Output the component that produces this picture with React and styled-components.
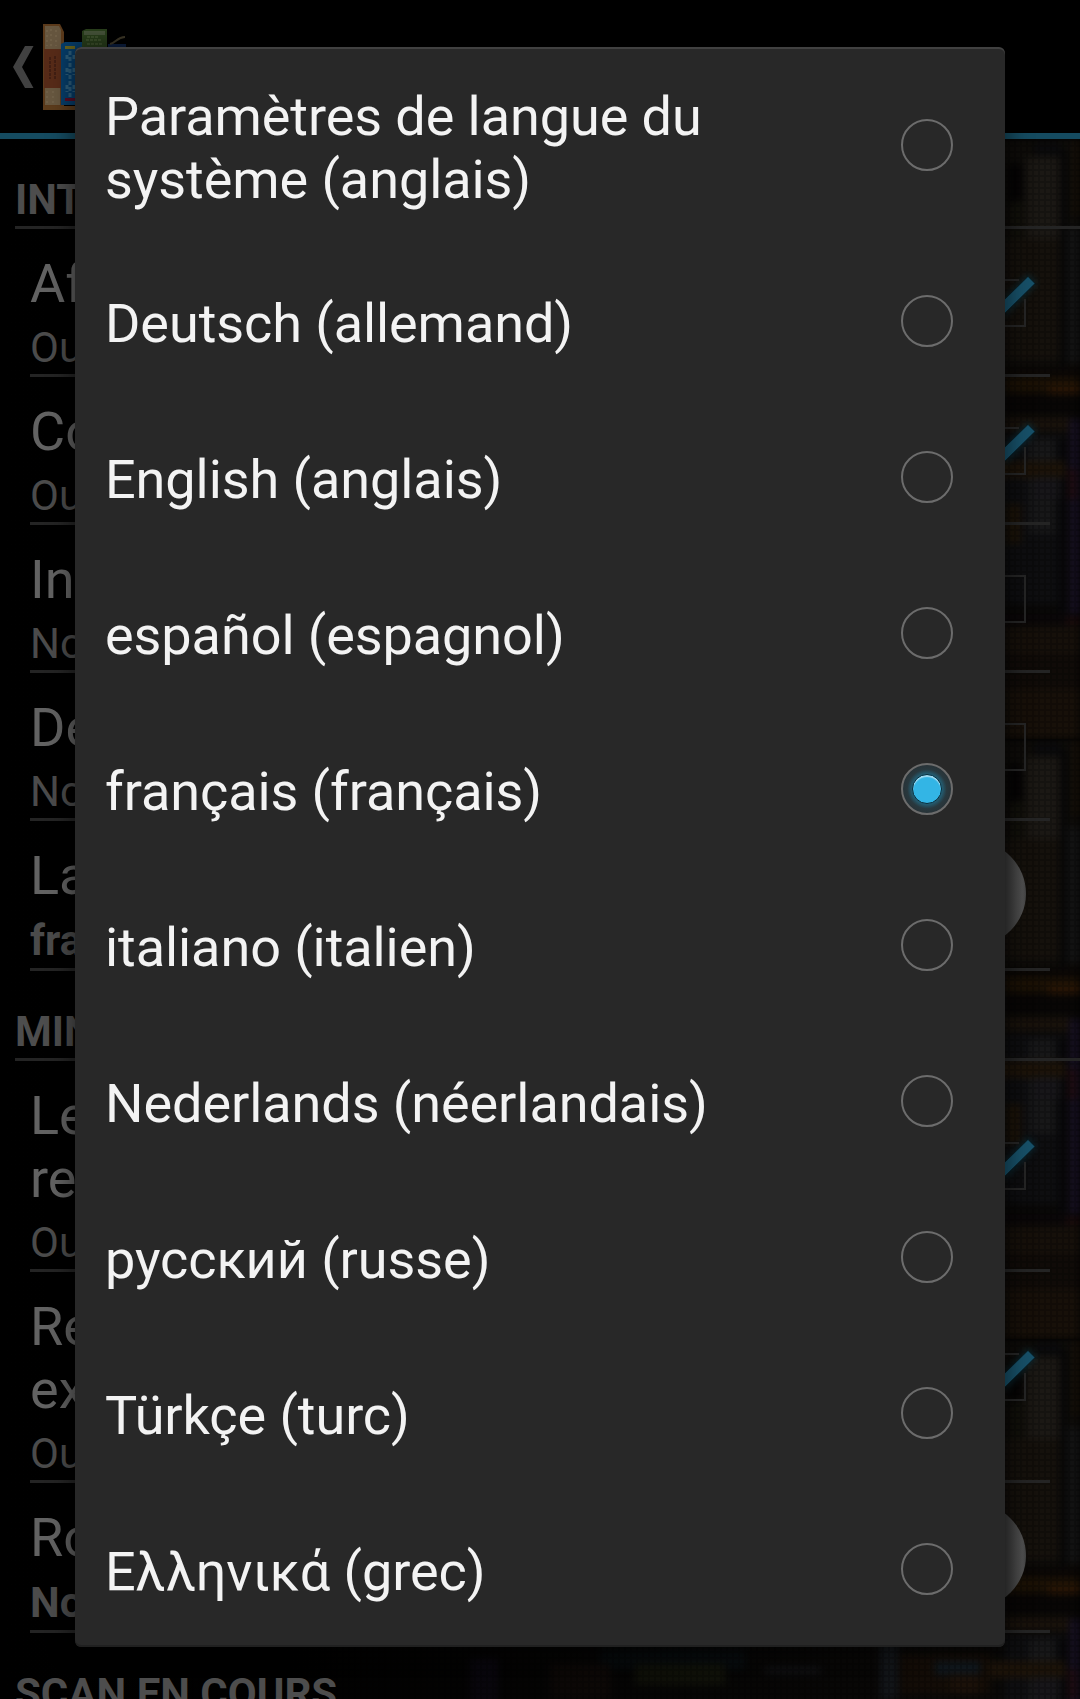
import React from "react";
import styled, { createGlobalStyle, css } from "styled-components";

const GlobalStyle = createGlobalStyle`
  *, *::before, *::after { box-sizing: border-box; }
  html, body { margin: 0; background: #000; overflow: hidden; }
`;

const Screen = styled.div`
  position: relative;
  isolation: isolate;
  width: 1080px;
  height: 1699px;
  overflow: hidden;
  background: #000;
  font-family: Roboto, "Noto Sans", sans-serif;
`;

/* ---------- action bar ---------- */

const ActionBar = styled.header`
  display: flex;
  align-items: flex-start;
  height: 139px;
  padding: 23px 0 0 13px;
  background: #000;
  border-bottom: 6px solid #154b60;
`;

const BackIcon = styled.svg`
  width: 21px;
  height: 42px;
  margin: 23px 9px 0 0;
`;

const Logo = styled.svg`
  width: 84px;
  height: 88px;
`;

const BooksLogo = () => (
  <Logo viewBox="43 23 84 88">
    <path d="M43 24h17l4 8v78h-21z" fill="#5b3a1b" />
    <path d="M45 26h14l2 4v19H45z" fill="#66563f" />
    <path d="M44 49h18v39H44z" fill="#572b18" />
    <path d="M45 88h15v17H45z" fill="#685840" />
    <path d="M43 106h40v4H43z" fill="#5c3c1c" />
    <path d="M50 57v22M55 56v24" stroke="#3c1c12" strokeWidth="1.5" strokeDasharray="3 1" />
    <path d="M47 30v16M51 29v17M56 30v16M47 91v12M53 91v12" stroke="#786850" strokeWidth="1" strokeDasharray="2 3" />
    <path d="M61 44l4-2h18v63H61z" fill="#063e6b" />
    <path d="M65 46h10v3H65z" fill="#6a661d" />
    <path d="M70 51v46M67 55v6M74 55v6M67 68v7M74 68v7M67 85v7M74 85v7" stroke="#2d5f7d" strokeWidth="3" strokeDasharray="4 2" />
    <path d="M65 98h11v3H65z" fill="#5a0d25" />
    <path d="M82 31l4-2h21v18H82z" fill="#2a401c" />
    <path d="M84 31h21v4H84z" fill="#46543a" />
    <path d="M86 40h16M87 37h12M87 44h15" stroke="#465a33" strokeWidth="1.5" strokeDasharray="3 1" />
    <path d="M108 44h18v6h-18z" fill="#0d2145" />
    <path d="M110 44c6-1 7-7 15-7" fill="none" stroke="#3f3929" strokeWidth="2" />
  </Logo>
);

/* ---------- bookshelf wallpaper ---------- */

const Wallpaper = styled.svg`
  position: absolute;
  z-index: -1;
  left: 0;
  top: 139px;
  width: 1080px;
  height: 1560px;
`;

const SHAPES = [
  [0, 0, 1080, 600, "#090807"],
  [1005, 0, 75, 250, "#0e0c09"],
  [1026, 18, 34, 190, "#1b1814"],
  [1008, 25, 14, 40, "#050404"],
  [1012, 62, 10, 70, "#12110a"],
  [1035, 4, 25, 12, "#0a0a0c"],
  [1060, 10, 7, 220, "#060606"],
  [1067, 88, 13, 135, "#131313"],
  [1072, 0, 8, 76, "#150f08"],
  [1005, 100, 55, 120, "#15110c"],
  [1005, 228, 75, 12, "#0a0705"],
  [1005, 238, 75, 16, "#1b1105"],
  [1048, 246, 32, 9, "#2a1605"],
  [1005, 256, 75, 18, "#080605"],
  [1005, 278, 65, 14, "#19120b"],
  [1005, 295, 60, 170, "#0e0e10"],
  [1028, 300, 28, 95, "#171718"],
  [1058, 300, 7, 190, "#070709"],
  [1069, 280, 11, 200, "#150f1f"],
  [1068, 330, 9, 30, "#1e0c12"],
  [1006, 365, 15, 40, "#1b1309"],
  [1005, 475, 75, 10, "#0a0708"],
  [1066, 479, 14, 6, "#1e0b0c"],
  [1005, 487, 75, 28, "#16100a"],
  [1005, 515, 75, 35, "#100b08"],
  [1005, 550, 75, 50, "#171009"],
  [600, 310, 145, 20, "#0a1013"],
  [635, 325, 90, 21, "#17190d"],
  [470, 320, 28, 45, "#160f20"],
  [550, 325, 60, 35, "#170f0c"],
  [765, 328, 55, 7, "#151518"],
  [880, 305, 18, 55, "#14171b"],
  [900, 315, 90, 40, "#140d07"],
  [935, 322, 45, 14, "#10171d"],
  [950, 335, 28, 20, "#1b1109"],
  [990, 322, 75, 17, "#1c1309"],
  [1035, 338, 25, 22, "#171619"],
];

const Bookshelf = () => (
  <Wallpaper viewBox="0 0 1080 1560">
    <defs>
      <filter id="soft" x="-10%" y="-10%" width="120%" height="120%" colorInterpolationFilters="sRGB">
        <feGaussianBlur stdDeviation="3.5" />
      </filter>
      <pattern id="mesh" width="6" height="6" patternUnits="userSpaceOnUse">
        <path d="M0 1h6M1 0v6" stroke="#000" strokeWidth="2" opacity="0.22" />
      </pattern>
      <pattern id="shelf" width="1080" height="600" patternUnits="userSpaceOnUse">
        <g filter="url(#soft)">
          {SHAPES.map(([x, y, w, h, fill], i) => (
            <rect key={i} x={x} y={y} width={w} height={h} fill={fill} />
          ))}
        </g>
      </pattern>
      <linearGradient id="fade">
        <stop offset="0" stopColor="#000" />
        <stop offset="0.25" stopColor="#000" stopOpacity="0.9" />
        <stop offset="0.9" stopColor="#000" stopOpacity="0" />
      </linearGradient>
    </defs>
    <rect width="1080" height="1560" fill="url(#shelf)" />
    <rect width="1080" height="1560" fill="url(#mesh)" />
    <rect width="1080" height="1560" fill="url(#fade)" />
  </Wallpaper>
);

/* ---------- settings list ---------- */

const Settings = styled.main`
  display: flex;
  flex-direction: column;
`;

const Category = styled.h2`
  flex: none;
  height: 90px;
  margin: 0 0 0 15px;
  padding-top: 36px;
  border-bottom: 3px solid #242424;
  color: #4d4d4d;
  font-size: 42px;
  font-weight: 700;
  line-height: 49px;
  white-space: nowrap;
`;

const Preference = styled.section`
  flex: none;
  display: flex;
  justify-content: space-between;
  align-items: center;
  height: ${(p) => p.$height}px;
  margin: 0 30px;
  padding-right: 24px;
  border-bottom: 3px solid #242424;
`;

const PrefText = styled.div`
  align-self: flex-start;
  padding-top: 23px;
`;

const PrefTitle = styled.div`
  color: #626262;
  font-size: 54px;
  line-height: 63px;
  white-space: pre-line;
`;

const PrefSummary = styled.div`
  margin-top: ${(p) => (p.$bold ? 9 : 8)}px;
  color: #4b4b4b;
  font-size: 42px;
  line-height: 49px;
  font-weight: ${(p) => (p.$bold ? 700 : 400)};
`;

const CheckIcon = styled.svg`
  width: 60px;
  height: 60px;
  margin: 2px -12px 0 0;
  overflow: visible;
`;

const Knob = styled.div`
  width: 105px;
  height: 105px;
  margin-bottom: 3px;
  border-radius: 50%;
  background: linear-gradient(90deg, #303030 75%, #505050 97%, #444 100%);
`;

const CheckBox = ({ checked }) => (
  <CheckIcon viewBox="0 0 60 60">
    {checked ? (
      <>
        <path d="M26 26L50 1l9 9L26 44z" fill="#0c3a49" opacity="0.55" filter="url(#soft)" />
        <path d="M41 7H1v46h46V26" fill="none" stroke="#252525" strokeWidth="2" />
        <path d="M26 27L50 3.500l7 7L26 41z" fill="#175068" stroke="#041217" strokeWidth="0.6" />
      </>
    ) : (
      <path d="M1 7h46v46H1z" fill="none" stroke="#252525" strokeWidth="2" />
    )}
  </CheckIcon>
);

const WIDGETS = {
  on: <CheckBox checked />,
  off: <CheckBox />,
  knob: <Knob />,
};

const SECTIONS = [
  {
    name: "INT",
    items: [
      { title: "Af", summary: "Ou", widget: "on", height: 148 },
      { title: "Co", summary: "Ou", widget: "on", height: 148 },
      { title: "In", summary: "No", widget: "off", height: 148 },
      { title: "De", summary: "No", widget: "off", height: 148 },
      { title: "La", summary: "fra", widget: "knob", height: 150 },
    ],
  },
  {
    name: "MIN",
    items: [
      { title: "Le\nre", summary: "Ou", widget: "on", height: 211 },
      { title: "Re\nex", summary: "Ou", widget: "on", height: 211 },
      { title: "Ro", summary: "No", widget: "knob", height: 150 },
    ],
  },
  { name: "SCAN EN COURS", items: [] },
];

/* ---------- language dialog ---------- */

const Dialog = styled.div`
  position: absolute;
  left: 75px;
  top: 47px;
  width: 930px;
  height: 1600px;
  overflow: hidden;
  display: flex;
  flex-direction: column;
  border-radius: 6px;
  background: #282828;
  box-shadow: 0 0 22px 4px rgba(0, 0, 0, 0.5);

  &::after {
    content: "";
    position: absolute;
    inset: 0;
    border-radius: 6px;
    box-shadow: inset 0 2px 0 #414141, inset 0 -2px 0 #202020;
    pointer-events: none;
  }
`;

const Option = styled.label`
  flex: none;
  display: flex;
  align-items: center;
  justify-content: space-between;
  height: ${(p) => (p.$tall ? 196 : 156)}px;
  padding: 0 52px 0 30px;
`;

const OptionLabel = styled.span`
  width: 700px;
  padding-top: ${(p) => (p.$tall ? 6 : 4)}px;
  color: #f3f3f3;
  font-size: 54px;
  letter-spacing: -0.07px;
  line-height: 63px;
`;

const Radio = styled.span`
  flex: none;
  display: grid;
  place-items: center;
  width: 52px;
  height: 52px;
  border: 2px solid #6c6c6c;
  border-radius: 50%;

  ${(p) =>
    p.$selected &&
    css`
      background: radial-gradient(circle closest-side, #22667f 58%, #29485480 82%, #283338 100%);

      &::after {
        content: "";
        width: 30px;
        height: 30px;
        border: 1px solid #0c2b38;
        border-radius: 50%;
        background: #33b5e5;
        box-shadow: inset 0 2px 1px #a5dcf1;
      }
    `}
`;

const LANGUAGES = [
  "Paramètres de langue du système (anglais)",
  "Deutsch (allemand)",
  "English (anglais)",
  "español (espagnol)",
  "français (français)",
  "italiano (italien)",
  "Nederlands (néerlandais)",
  "русский (russe)",
  "Türkçe (turc)",
  "Ελληνικά (grec)",
];

export default function App() {
  return (
    <Screen>
      <GlobalStyle />
      <Bookshelf />
      <ActionBar>
        <BackIcon viewBox="0 0 21 42">
          <path d="M12 0h8.500L9 21l11.500 21H12L0 21z" fill="#414141" />
        </BackIcon>
        <BooksLogo />
      </ActionBar>
      <Settings>
        {SECTIONS.map((section) => (
          <React.Fragment key={section.name}>
            <Category>{section.name}</Category>
            {section.items.map((item) => (
              <Preference key={item.title} $height={item.height}>
                <PrefText>
                  <PrefTitle>{item.title}</PrefTitle>
                  <PrefSummary $bold={item.widget === "knob"}>{item.summary}</PrefSummary>
                </PrefText>
                {WIDGETS[item.widget]}
              </Preference>
            ))}
          </React.Fragment>
        ))}
      </Settings>
      <Dialog>
        {LANGUAGES.map((name, i) => (
          <Option key={name} $tall={i === 0}>
            <OptionLabel $tall={i === 0}>{name}</OptionLabel>
            <Radio $selected={i === 4} />
          </Option>
        ))}
      </Dialog>
    </Screen>
  );
}
